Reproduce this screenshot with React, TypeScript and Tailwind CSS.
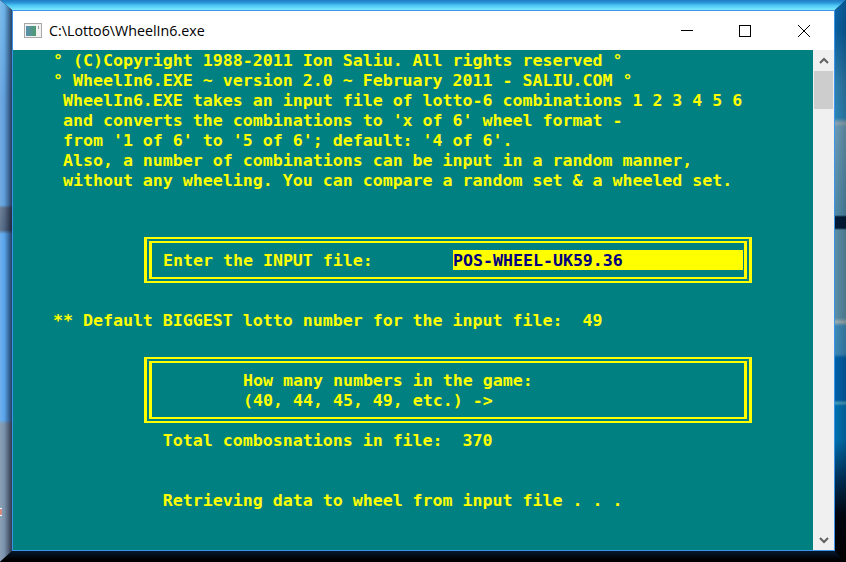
import React from "react";

const lineCls = "h-5 leading-[22px] whitespace-pre";

function Box({ h, children }: { h: string; children: React.ReactNode }) {
  return (
    <div className={`ml-[131px] w-[608px] ${h} border-x-[3px] border-y-2 border-[#ffff00] p-[2px]`}>
      <div className="h-full w-full border-x-[3px] border-y-2 border-[#ffff00]">{children}</div>
    </div>
  );
}

export default function App() {
  return (
    <div className="relative h-[562px] w-[846px] overflow-hidden bg-black">
      {/* desktop showing round the window, cut with mitred corners */}
      <div className="absolute inset-x-0 top-0 h-[10px] bg-[linear-gradient(to_bottom,#1f7cc4,#2a93d6_25%,#4cc6f4_55%,#7eeaff)] [clip-path:polygon(0_0,100%_0,calc(100%-11px)_100%,12px_100%)]" />
      <div className="absolute left-0 top-0 h-[562px] w-[12px] bg-[linear-gradient(to_right,rgba(255,255,255,0.12),rgba(0,0,0,0)_35%,rgba(0,0,20,0.62)),linear-gradient(to_bottom,#6db4ea,#5f9fdc_100px,#5f9fdc_205px,#5c7088_208px,#4f6580_230px,#5aa6ec_234px,#5aa6ec_420px,#7b93ac_424px,#7b93ac)] [clip-path:polygon(0_0,100%_10px,100%_551px,0_562px)]" />
      <div className="absolute right-0 top-0 h-[562px] w-[11px] bg-[linear-gradient(to_right,rgba(0,0,0,0),rgba(0,0,0,0.18)),linear-gradient(to_bottom,#0b66ac,#0a5f9f_30px,#2f7fae_85px,#2b86b8_118px,#8fa6b4_123px,#6a9ab6_127px,#4f8aa8_215px,#001a38_217px,#001a38_228px,#5a8fa8_230px,#5a8fa8_318px,#a0b0b4_322px,#3f8ab6_326px,#3a88b8_354px,#0060a8_358px,#0060a8_400px,#4aa0c0_403px,#0070b0_406px,#0070b0_440px,#003058_480px,#000510_515px,#000000)] [clip-path:polygon(0_10px,100%_0,100%_562px,0_551px)]" />
      <div className="absolute bottom-0 inset-x-0 h-[11px] bg-[linear-gradient(to_bottom,#06182e,#000000_80%)] [clip-path:polygon(12px_0,calc(100%-11px)_0,100%_100%,0_100%)]" />
      <div className="absolute left-0 top-[508px] h-[8px] w-[2px] border-y border-white bg-[#d88a84]" />

      <div className="absolute left-[12px] top-[10px] flex h-[541px] w-[823px] flex-col border border-[#3d94e6]">
        <div className="flex h-[39px] flex-none items-center bg-white pl-[11px]">
          <svg width="18" height="15" viewBox="0 0 18 15" className="mr-[7px]">
            <defs>
              <linearGradient id="ico" x1="0" y1="0" x2="1" y2="0">
                <stop offset="0" stopColor="#5a8fb0" />
                <stop offset="1" stopColor="#4f9a70" />
              </linearGradient>
            </defs>
            <rect x="0.5" y="0.5" width="17" height="14" fill="#f2f2f2" stroke="#a8a8a8" />
            <rect x="2" y="3" width="10" height="10" fill="url(#ico)" />
            <rect x="14" y="3" width="1" height="3" fill="#9a9a9a" />
          </svg>
          <span className="font-['Open_Sans',sans-serif] text-[14.25px] text-black">C:\Lotto6\WheelIn6.exe</span>
          <div className="ml-auto flex h-full items-center">
            <svg width="12" height="12" viewBox="0 0 12 12" className="mr-[46px]"><path d="M0 5.5H12" stroke="#000" /></svg>
            <svg width="12" height="12" viewBox="0 0 12 12" className="mr-[47px]"><rect x="0.5" y="0.5" width="11" height="11" fill="none" stroke="#000" /></svg>
            <svg width="12" height="12" viewBox="0 0 12 12" className="mr-[24px]"><path d="M0 0L12 12M12 0L0 12" stroke="#000" /></svg>
          </div>
        </div>
        <div className="flex min-h-0 flex-1">
          <div className="flex-1 bg-[#008080] font-['DejaVu_Sans_Mono',monospace] text-[16.6px] font-bold text-[#ffff00]">
            <div className={lineCls}>    ° (C)Copyright 1988-2011 Ion Saliu. All rights reserved °</div>
            <div className={lineCls}>    ° WheelIn6.EXE ~ version 2.0 ~ February 2011 - SALIU.COM °</div>
            <div className={lineCls}>     WheelIn6.EXE takes an input file of lotto-6 combinations 1 2 3 4 5 6</div>
            <div className={lineCls}>     and converts the combinations to 'x of 6' wheel format -</div>
            <div className={lineCls}>     from '1 of 6' to '5 of 6'; default: '4 of 6'.</div>
            <div className={lineCls}>     Also, a number of combinations can be input in a random manner,</div>
            <div className={lineCls}>     without any wheeling. You can compare a random set &amp; a wheeled set.</div>
            <div className="h-[47px]" />
            <Box h="h-[46px]">
              <div className="flex h-full items-center">
                <span className="ml-[11px] h-5 w-[290px] whitespace-pre leading-[22px]">Enter the INPUT file:</span>
                <span className="h-5 w-[290px] bg-[#ffff00] leading-[22px] text-[#000080]">POS-WHEEL-UK59.36</span>
              </div>
            </Box>
            <div className="h-[27px]" />
            <div className={lineCls}>    ** Default BIGGEST lotto number for the input file:  49</div>
            <div className="h-[27px]" />
            <Box h="h-[66px]">
              <div className="pl-[91px] pt-[7px]">
                <div className={lineCls}>How many numbers in the game:</div>
                <div className={lineCls}>(40, 44, 45, 49, etc.) -&gt;</div>
              </div>
            </Box>
            <div className="h-[7px]" />
            <div className={lineCls}>               Total combosnations in file:  370</div>
            <div className="h-[40px]" />
            <div className={lineCls}>               Retrieving data to wheel from input file . . .</div>
          </div>
          <div className="flex w-[21px] flex-none flex-col items-center bg-[#f0f0f0]">
            <div className="flex h-[21px] items-center justify-center">
              <svg width="10" height="8" viewBox="0 0 10 8"><path d="M1 6L5 2L9 6" fill="none" stroke="#606060" strokeWidth="2" /></svg>
            </div>
            <div className="h-[38px] w-[19px] bg-[#cdcdcd]" />
            <div className="flex-1" />
            <div className="flex h-[21px] items-center justify-center">
              <svg width="10" height="8" viewBox="0 0 10 8"><path d="M1 2L5 6L9 2" fill="none" stroke="#606060" strokeWidth="2" /></svg>
            </div>
          </div>
        </div>
      </div>
    </div>
  );
}
